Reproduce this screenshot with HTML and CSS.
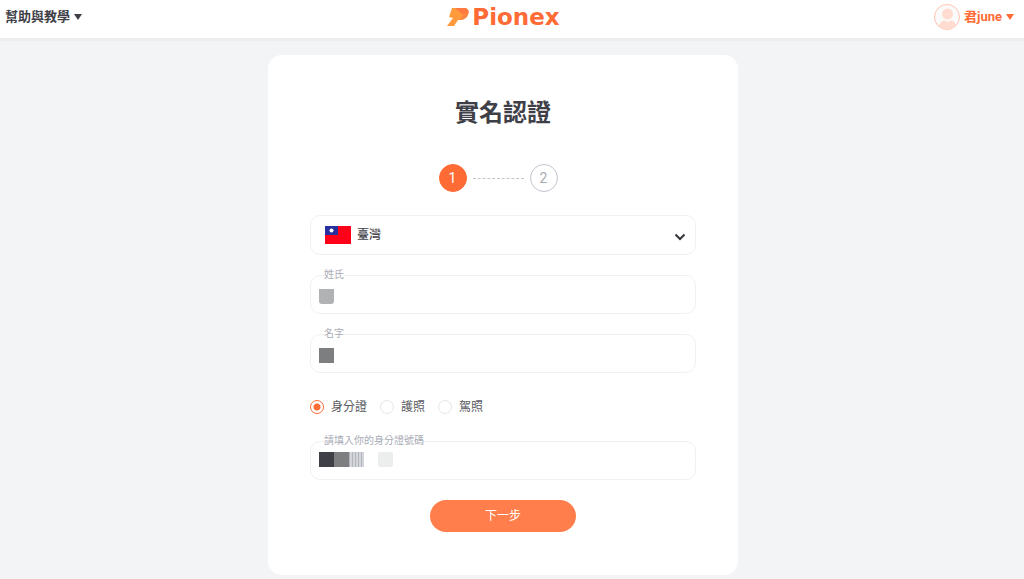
FILE: index.html
```
<!DOCTYPE html>
<html lang="zh-Hant">
<head>
    <meta charset="UTF-8">
    <meta name="viewport" content="width=device-width, initial-scale=1.0">
    <title>實名認證 - Pionex</title>
    <link rel="stylesheet" href="styles.css">
</head>
<body>
    <header class="header">
        <button type="button" class="menu">幫助與教學<span class="caret"></span></button>
        <a href="#" class="logo">
            <svg class="logo-mark" viewBox="0 0 22 20" aria-hidden="true">
                <path d="M5 1H15L19 6L15 13H11L7 19H0L6 11L2 10Z" fill="#ff9a3d"/>
                <path d="M13 13C18 13 21 10 21.500 6C22 3 20 1 17 1H13L16 7Z" fill="#ff8745"/>
                <path d="M8 1H17C20 1 22 3 21.500 6L15 7Z" fill="#ff7a40"/>
            </svg>
            <span>Pionex</span>
        </a>
        <button type="button" class="menu user">
            <svg class="avatar" viewBox="0 0 26 26" aria-hidden="true">
                <defs>
                    <clipPath id="avatar-clip"><circle cx="13" cy="13" r="12"/></clipPath>
                </defs>
                <circle cx="13" cy="13" r="12.5" fill="#fafafa" stroke="#ffc4ae"/>
                <g clip-path="url(#avatar-clip)" fill="#ffdccf">
                    <circle cx="13.500" cy="10" r="5.500"/>
                    <path d="M4 26C4 20 8 17 10 16.500C12 18 15 18 17 16.500C20 17 23 20 23 26Z"/>
                </g>
            </svg>
            君june<span class="caret"></span>
        </button>
    </header>

    <main class="page">
        <form class="card">
            <h1>實名認證</h1>

            <ol class="steps">
                <li class="step active">1</li>
                <li class="step-line"></li>
                <li class="step">2</li>
            </ol>

            <div class="field country">
                <svg class="flag" viewBox="0 0 26 18" aria-hidden="true">
                    <rect width="26" height="18" fill="#ff0018"/>
                    <rect width="13" height="9" fill="#27309c"/>
                    <circle cx="6.500" cy="4.500" r="2" fill="#fff"/>
                </svg>
                <select aria-label="國家">
                    <option>臺灣</option>
                </select>
                <svg class="chevron" viewBox="0 0 12 8" aria-hidden="true">
                    <path d="M1.500 1.500L6 6L10.500 1.500" fill="none" stroke="#34343c" stroke-width="2"/>
                </svg>
            </div>

            <div class="field">
                <label for="last-name">姓氏</label>
                <input type="text" id="last-name">
                <span class="mask"><i class="block light"></i></span>
            </div>

            <div class="field">
                <label for="first-name">名字</label>
                <input type="text" id="first-name">
                <span class="mask"><i class="block mid"></i></span>
            </div>

            <div class="doc-types">
                <label><input type="radio" name="doc" checked>身分證</label>
                <label><input type="radio" name="doc">護照</label>
                <label><input type="radio" name="doc">駕照</label>
            </div>

            <div class="field">
                <label for="id-number">請填入你的身分證號碼</label>
                <input type="text" id="id-number">
                <span class="mask id-mask">
                    <i class="block dark"></i><i class="block mid"></i><i class="block striped"></i><i class="block pale"></i>
                </span>
            </div>

            <button type="submit" class="next">下一步</button>
        </form>
    </main>
</body>
</html>
```
FILE: styles.css
```
:root {
    --orange: #ff6b35;
    --text: #3f4047;
    --text-light: #5b5c63;
    --muted: #a9abb5;
    --line: #f0f1f2;
    --bg: #f3f4f6;
}

* {
    box-sizing: border-box;
    margin: 0;
    padding: 0;
}

body {
    font-family: "Liberation Sans", "Noto Sans CJK TC", sans-serif;
    font-size: 12px;
    color: var(--text);
    background: var(--bg);
}

button,
input,
select {
    font: inherit;
    color: inherit;
    background: none;
    border: 0;
}

/* Header */
.header {
    display: grid;
    grid-template-columns: 1fr auto 1fr;
    align-items: center;
    height: 41px;
    padding: 0 10px 4px 5px;
    background: #fff;
    border-bottom: 3px solid #eceeee;
}

.menu {
    display: flex;
    align-items: center;
    justify-self: start;
    font-size: 13px;
    font-weight: 700;
    line-height: 20px;
    cursor: pointer;
}

.caret {
    margin-left: 4px;
    border: 4px solid transparent;
    border-top: 6px solid currentColor;
    border-bottom: 0;
}

.user {
    justify-self: end;
    font-family: Roboto, "Noto Sans CJK TC", sans-serif;
    color: var(--orange);
}

.avatar {
    width: 26px;
    height: 26px;
    margin-right: 4px;
}

.logo {
    display: flex;
    align-items: center;
    gap: 3px;
    margin-right: 12px;
    font-family: "DejaVu Sans", sans-serif;
    font-size: 23px;
    font-weight: 700;
    line-height: 32px;
    color: var(--orange);
    text-decoration: none;
}

.logo-mark {
    width: 22px;
    height: 20px;
}

/* Card */
.page {
    padding: 14px 18px 4px 0;
}

.card {
    display: flex;
    flex-direction: column;
    max-width: 470px;
    margin: 0 auto;
    padding: 40px 42px 43px;
    background: #fff;
    border-radius: 14px;
}

h1 {
    font-size: 24px;
    line-height: 36px;
    text-align: center;
}

.steps {
    display: flex;
    align-items: center;
    justify-content: center;
    gap: 6px;
    margin: 33px 10px 23px 0;
    list-style: none;
}

.step {
    width: 28px;
    height: 28px;
    font-family: Roboto, sans-serif;
    font-size: 14px;
    line-height: 26px;
    text-align: center;
    color: var(--muted);
    border: 1px solid #c3c5cd;
    border-radius: 50%;
}

.step.active {
    color: #fff;
    background: var(--orange);
    border-color: var(--orange);
}

.step-line {
    width: 51px;
    border-top: 1px dashed #c3c5cd;
}

.field {
    position: relative;
    margin-bottom: 20px;
}

.field input,
.field select {
    display: block;
    width: 100%;
    height: 39px;
    padding: 0 10px;
    border: 1px solid var(--line);
    border-radius: 10px;
}

.field label {
    position: absolute;
    top: -7px;
    left: 14px;
    font-size: 10px;
    line-height: 14px;
    color: var(--muted);
    background: #fff;
}

.country select {
    height: 40px;
    padding: 0 40px 0 46px;
    font-weight: 500;
    appearance: none;
}

.flag {
    position: absolute;
    top: 11px;
    left: 15px;
    width: 26px;
    height: 18px;
}

.chevron {
    position: absolute;
    top: 18px;
    right: 10px;
    width: 12px;
    height: 8px;
    pointer-events: none;
}

/* Masked values */
.mask {
    position: absolute;
    top: 14px;
    left: 9px;
    display: flex;
}

.id-mask {
    top: 11px;
}

.block {
    width: 15px;
    height: 15px;
}

.light {
    background: #b1b2b4;
    border-radius: 0 0 3px 3px;
}

.mid {
    background: #7d7e80;
}

.dark {
    background: #3f4047;
}

.striped {
    background: repeating-linear-gradient(90deg, #b4b6bd 0 1px, #d3d5da 1px 3px);
}

.pale {
    margin-left: 14px;
    background: #eceeee;
    border-radius: 2px;
}

/* Document type */
.doc-types {
    display: flex;
    gap: 13px;
    margin: 4px 0 24px;
    line-height: 20px;
    color: var(--text-light);
}

.doc-types label {
    display: flex;
    align-items: center;
    gap: 7px;
}

.doc-types input {
    width: 14px;
    height: 14px;
    border: 1px solid #e6e7ea;
    border-radius: 50%;
    appearance: none;
}

.doc-types input:checked {
    border-color: var(--orange);
    background: radial-gradient(circle, var(--orange) 3px, transparent 4px);
}

.next {
    align-self: center;
    width: 146px;
    height: 32px;
    padding-bottom: 4px;
    color: #fff;
    background: #ff7e4b;
    border-radius: 16px;
    cursor: pointer;
}
```
